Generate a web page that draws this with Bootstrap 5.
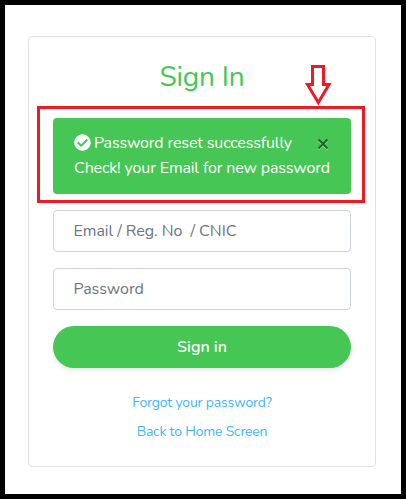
<!DOCTYPE html>
<html lang="en">
<head>
<meta charset="utf-8">
<meta name="viewport" content="width=device-width, initial-scale=1">
<title>Sign In</title>
<link rel="stylesheet" href="https://cdn.jsdelivr.net/npm/bootstrap@5.3.0/dist/css/bootstrap.min.css">
<style>
body{font-family:Nunito,Lato,"Open Sans",sans-serif;font-size:16px;color:#6c757d}
.page-frame{height:499px;border:5px solid #000;padding:31px 25px 27px 23px}
.signin-card{border:1px solid #dee2e6;border-radius:4px;padding:24px}
.title{font-size:28px;line-height:34px;color:#46c654;margin:-1px 0 24px;letter-spacing:-.2px}
.notice{height:76px;background:#46c654;border-radius:4px;padding:13px 0 0 21px;line-height:25px;margin-bottom:16px;color:#fff;white-space:nowrap;letter-spacing:-.14px}
.notice-icon{margin:-3px 3px 0 0}
.notice-close{left:264px;top:19px;line-height:0;padding:0;border:0;background:none}
.outline-box{left:-16px;top:-12px;width:328px;height:97px;border:3px solid #ed1c24}
.arrow-down{left:252px;top:-54px}
.field{height:42px;border:1px solid #ced4da;border-radius:4px;padding:0 19.5px;margin-bottom:16px;font-size:16px;letter-spacing:-.05px}
.field::placeholder{color:#6c757d}
.btn-signin{height:42px;background:#46c654;color:#fff;font-weight:600;border:0;box-shadow:0 2px 6px rgba(0,0,0,.1);margin-bottom:24px}
.links{font-size:14px;line-height:21px;gap:8px;letter-spacing:-.2px}
.links a{color:#3fb5fd}
</style>
</head>
<body>
<main class="page-frame">
<div class="signin-card h-100 bg-white">
<h1 class="title text-center fw-normal">Sign In</h1>
<div class="notice position-relative" role="alert">
<div class="d-flex align-items-center"><svg class="notice-icon" width="17" height="17" viewBox="0 0 512 512" fill="#fff"><path d="M504 256c0 137-111 248-248 248S8 393 8 256 119 8 256 8s248 111 248 248zM227.300 387.300l184-184c6.200-6.200 6.200-16.400 0-22.600l-22.600-22.600c-6.200-6.200-16.400-6.200-22.600 0L216 308.100l-70.100-70.100c-6.200-6.200-16.400-6.200-22.600 0l-22.600 22.600c-6.200 6.200-6.200 16.400 0 22.600l104 104c6.200 6.300 16.400 6.300 22.600.1z"/></svg><span>Password reset successfully</span></div>
<div>Check! your Email for new password</div>
<button type="button" class="notice-close position-absolute" aria-label="Close"><svg width="12" height="14" viewBox="0 0 12 14" fill="none" stroke-width="2"><path d="M1.500 3.500l9 9m0-9l-9 9" stroke="#9be2a2"/><path d="M1.500 2.500l9 9m0-9l-9 9" stroke="#23632a"/></svg></button>
<div class="outline-box position-absolute pe-none"></div>
<svg class="arrow-down position-absolute" width="27" height="42" viewBox="0 0 27 42" fill="none" stroke="#ed1c24" stroke-width="3"><path d="M7.500 2.500h11v18h5.500L13.300 38.500l-10.800-18h5z"/></svg>
</div>
<form>
<input class="field form-control" type="text" placeholder="Email / Reg. No&nbsp; / CNIC" aria-label="Email, registration number or CNIC">
<input class="field form-control" type="password" placeholder="Password" aria-label="Password">
<button type="button" class="btn btn-signin rounded-pill w-100">Sign in</button>
</form>
<div class="links d-flex flex-column align-items-center">
<a href="#" class="text-decoration-none">Forgot your password?</a>
<a href="#" class="text-decoration-none">Back to Home Screen</a>
</div>
</div>
</main>
<script src="https://cdn.jsdelivr.net/npm/bootstrap@5.3.0/dist/js/bootstrap.bundle.min.js"></script>
</body>
</html>
